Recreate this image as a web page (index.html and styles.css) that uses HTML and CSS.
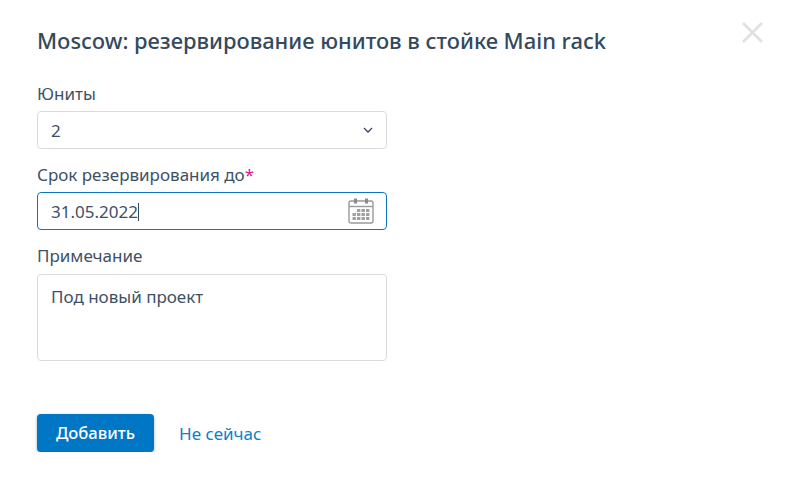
FILE: index.html
```html
<!DOCTYPE html>
<html lang="en">

<head>
    <meta charset="UTF-8">
    <title>Document</title>
    <link rel="stylesheet" href="styles.css">
</head>

<body>
<div class="dialog">
    <div class="dialog_head">
        <h1>Moscow: резервирование юнитов в стойке Main rack</h1>
        <svg class="close" width="24" height="24" viewBox="0 0 24 24">
            <path d="M3 3 L22 22 M22 3 L3 22" stroke="#dfe1e3" stroke-width="2.8" fill="none"/>
        </svg>
    </div>
    <form class="form" action="#">
        <div class="field">
            <label>Юниты</label>
            <div class="box">
                <span>2</span>
                <svg width="10" height="6" viewBox="0 0 10 6">
                    <path d="M1 1 L5 5 L9 1" stroke="#34495e" stroke-width="1.3" fill="none"/>
                </svg>
            </div>
        </div>
        <div class="field">
            <label>Срок резервирования до<span class="req">*</span></label>
            <div class="box box_active">
                <span class="value">31.05.2022<i class="caret"></i></span>
                <svg width="26" height="26" viewBox="0 0 26 26">
                    <rect x="1" y="3" width="24" height="22" rx="2" fill="#fff" stroke="#999" stroke-width="1.4"/>
                    <path d="M1 8.5 H25" stroke="#999" stroke-width="1.4"/>
                    <rect x="6" y="0.5" width="3" height="5" fill="#8a8a8a"/>
                    <rect x="17" y="0.5" width="3" height="5" fill="#8a8a8a"/>
                    <path d="M9 11 h3.4 v3 h-3.4z M13.5 11 h3.4 v3 h-3.4z M18 11 h3.4 v3 h-3.4z M4.5 15 h3.4 v3 h-3.4z M9 15 h3.4 v3 h-3.4z M13.5 15 h3.4 v3 h-3.4z M18 15 h3.4 v3 h-3.4z M4.5 19 h3.4 v3 h-3.4z M9 19 h3.4 v3 h-3.4z M13.5 19 h3.4 v3 h-3.4z M18 19 h3.4 v3 h-3.4z" fill="#a0a0a0"/>
                </svg>
            </div>
        </div>
        <div class="field">
            <label>Примечание</label>
            <div class="box box_area">Под новый проект</div>
        </div>
        <div class="actions">
            <button class="add" type="button">Добавить</button>
            <a href="#">Не сейчас</a>
        </div>
    </form>
</div>
</body>

</html>
```

FILE: styles.css
```css
* {
    margin: 0;
    padding: 0;
    box-sizing: border-box;
}

body {
    background: #fff;
    color: #3d5166;
    font: 17px "Noto Sans", "Liberation Sans", sans-serif;
}

.dialog {
    padding: 26px 37px 0 37px;
}

.dialog_head {
    display: flex;
    justify-content: space-between;
    align-items: flex-start;
}

.dialog_head h1 {
    font-size: 21.9px;
    font-weight: 500;
    line-height: 30px;
    color: #34495e;
}

.close {
    margin-top: -6px;
}

.form {
    width: 350px;
    margin-top: 27px;
}

.field {
    margin-bottom: 15px;
}

.field label {
    display: block;
    line-height: 22px;
    margin-bottom: 6px;
}

.req {
    color: #e0218a;
}

.box {
    display: flex;
    justify-content: space-between;
    align-items: center;
    height: 38px;
    padding: 0 13px;
    border: 1px solid #d9dcdf;
    border-radius: 4px;
}

.box_active {
    border-color: #0d76bd;
    padding-right: 12px;
}

.box_area {
    height: 87px;
    margin-top: 7px;
    align-items: flex-start;
    padding-top: 11px;
    line-height: 22px;
}

.caret {
    display: inline-block;
    width: 1px;
    height: 18px;
    background: #34495e;
    vertical-align: -3px;
}

.actions {
    display: flex;
    align-items: center;
    gap: 25px;
    margin-top: 53px;
}

.add {
    width: 117px;
    height: 38px;
    padding-bottom: 1px;
    border: 0;
    border-radius: 4px;
    background: #0077c5;
    color: #fff;
    font: 500 16.6px "Noto Sans", "Liberation Sans", sans-serif;
    box-shadow: 0 1px 3px rgba(0, 0, 0, .35);
}

.actions a {
    color: #0d7fc9;
    text-decoration: none;
}
```
